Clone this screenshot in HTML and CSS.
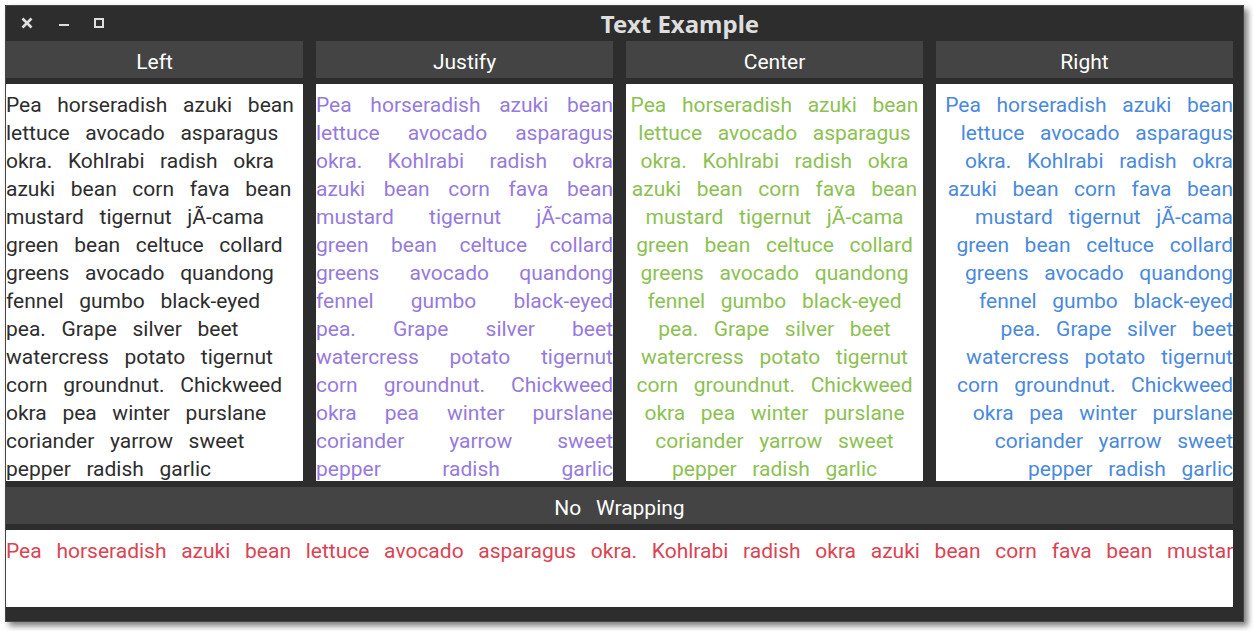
FILE: index.html
```
<!DOCTYPE html>
<html lang="en">
<head>
<meta charset="utf-8">
<title>Text Example</title>
<link rel="stylesheet" href="styles.css">
</head>
<body>
<main class="window">
  <header class="titlebar">
    <div class="controls">
      <button class="control" type="button" aria-label="Close"><svg width="12" height="12" viewBox="0 0 12 12"><path d="M1.5 1.5L10.5 10.5M10.5 1.5L1.5 10.5" stroke="currentColor" stroke-width="2.6" fill="none"/></svg></button>
      <button class="control" type="button" aria-label="Minimize"><svg width="12" height="12" viewBox="0 0 12 12"><path d="M2 7h10v2H2z" fill="currentColor"/></svg></button>
      <button class="control" type="button" aria-label="Maximize"><svg width="12" height="12" viewBox="0 0 12 12"><path d="M2 2h8v8H2z" stroke="currentColor" stroke-width="2" fill="none"/></svg></button>
    </div>
    <h1 class="title">Text Example</h1>
  </header>
  <div class="content">
    <div class="columns">
      <section class="column">
        <h2 class="label">Left</h2>
        <p class="panel left">Pea   horseradish   azuki   bean   lettuce   avocado   asparagus   okra.   Kohlrabi   radish   okra   azuki   bean   corn   fava   bean   mustard   tigernut   jÃ-cama   green   bean   celtuce   collard   greens   avocado   quandong   fennel   gumbo   black-eyed   pea.   Grape   silver   beet   watercress   potato   tigernut   corn   groundnut.   Chickweed   okra   pea   winter   purslane   coriander   yarrow   sweet   pepper   radish   garlic</p>
      </section>
      <section class="column">
        <h2 class="label">Justify</h2>
        <p class="panel justify">Pea   horseradish   azuki   bean   lettuce   avocado   asparagus   okra.   Kohlrabi   radish   okra   azuki   bean   corn   fava   bean   mustard   tigernut   jÃ-cama   green   bean   celtuce   collard   greens   avocado   quandong   fennel   gumbo   black-eyed   pea.   Grape   silver   beet   watercress   potato   tigernut   corn   groundnut.   Chickweed   okra   pea   winter   purslane   coriander   yarrow   sweet   pepper   radish   garlic</p>
      </section>
      <section class="column">
        <h2 class="label">Center</h2>
        <p class="panel center">Pea   horseradish   azuki   bean   lettuce   avocado   asparagus   okra.   Kohlrabi   radish   okra   azuki   bean   corn   fava   bean   mustard   tigernut   jÃ-cama   green   bean   celtuce   collard   greens   avocado   quandong   fennel   gumbo   black-eyed   pea.   Grape   silver   beet   watercress   potato   tigernut   corn   groundnut.   Chickweed   okra   pea   winter   purslane   coriander   yarrow   sweet   pepper   radish   garlic</p>
      </section>
      <section class="column">
        <h2 class="label">Right</h2>
        <p class="panel right">Pea   horseradish   azuki   bean   lettuce   avocado   asparagus   okra.   Kohlrabi   radish   okra   azuki   bean   corn   fava   bean   mustard   tigernut   jÃ-cama   green   bean   celtuce   collard   greens   avocado   quandong   fennel   gumbo   black-eyed   pea.   Grape   silver   beet   watercress   potato   tigernut   corn   groundnut.   Chickweed   okra   pea   winter   purslane   coriander   yarrow   sweet   pepper   radish   garlic</p>
      </section>
    </div>
    <section class="column">
      <h2 class="label">No &thinsp; Wrapping</h2>
      <p class="panel nowrap">Pea &thinsp; horseradish &thinsp; azuki &thinsp; bean &thinsp; lettuce &thinsp; avocado &thinsp; asparagus &thinsp; okra. &thinsp; Kohlrabi &thinsp; radish &thinsp; okra &thinsp; azuki &thinsp; bean &thinsp; corn &thinsp; fava &thinsp; bean &thinsp; mustard</p>
    </section>
  </div>
</main>
</body>
</html>
```
FILE: styles.css
```
* {
  box-sizing: border-box;
}

body {
  margin: 0;
  min-height: 100vh;
  padding: 5px 9px 9px 5px;
  display: flex;
  background: #fff;
  font-family: Roboto, sans-serif;
  font-size: 21px;
  line-height: 28px;
}

.window {
  flex: 1;
  min-width: 0;
  display: flex;
  flex-direction: column;
  background: #2d2d2d;
  border: 1px solid #464646;
  box-shadow: 4px 4px 6px rgba(0, 0, 0, 0.5);
}

.titlebar {
  height: 35px;
  display: flex;
  align-items: center;
  gap: 12px;
  padding-left: 15px;
  color: #dedede;
}

.controls {
  display: flex;
  gap: 24px;
  padding-bottom: 1px;
}

.control {
  display: flex;
  padding: 0;
  border: 0;
  background: none;
  color: inherit;
}

.title {
  flex: 1;
  margin: 0;
  font-family: "Noto Sans", sans-serif;
  font-size: 24px;
  font-weight: 700;
  text-align: center;
}

.content {
  flex: 1;
  display: flex;
  flex-direction: column;
  gap: 6px;
  padding: 0 10px 14px 0;
}

.columns {
  flex: 1;
  display: grid;
  grid-template-columns: repeat(4, minmax(0, 1fr));
  gap: 13px;
}

.column {
  display: flex;
  flex-direction: column;
  gap: 6px;
  min-width: 0;
}

.label {
  margin: 0;
  padding: 7px 0 2px;
  background: #444;
  color: #fff;
  font-size: 21px;
  font-weight: 400;
  text-align: center;
  white-space: pre-wrap;
}

.panel {
  flex: 1;
  margin: 0;
  padding-top: 7px;
  background: #fff;
  white-space: pre-wrap;
}

.columns .panel {
  max-height: 397px;
}

.left {
  color: #2d2d2d;
}

.justify {
  color: #967adc;
  text-align: justify;
  text-align-last: justify;
}

.center {
  color: #8cc152;
  text-align: center;
}

.right {
  color: #4a89dc;
  text-align: right;
}

.nowrap {
  min-height: 77px;
  color: #da4453;
  white-space: pre;
  overflow: hidden;
}
```
